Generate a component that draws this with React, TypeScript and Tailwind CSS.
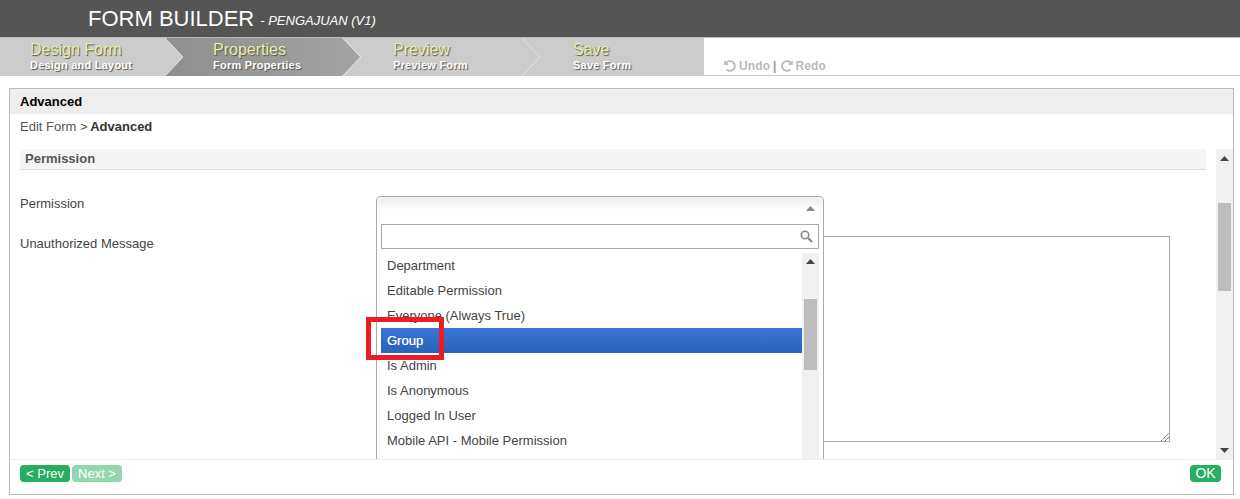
import { FaRedoAlt, FaUndoAlt } from 'react-icons/fa';

const permissionOptions = [
  'Department',
  'Editable Permission',
  'Everyone (Always True)',
  'Group',
  'Is Admin',
  'Is Anonymous',
  'Logged In User',
  'Mobile API - Mobile Permission',
];

const steps = [
  { title: 'Design Form', sub: 'Design and Layout', width: 'w-[165px]', pad: 'pl-[30px]' },
  { title: 'Properties', sub: 'Form Properties', width: 'w-[180px]', pad: 'pl-[48px]' },
  { title: 'Preview', sub: 'Preview Form', width: 'w-[179px]', pad: 'pl-[48px]' },
  { title: 'Save', sub: 'Save Form', width: 'w-[179px]', pad: 'pl-[49px]' },
];

function Chevron({ x }: { x: number }) {
  return (
    <svg className="absolute top-0 h-[38px] w-[22px]" style={{ left: x }} viewBox="0 0 22 38">
      <path d="M1 0 L19 19 L1 38" fill="none" stroke="#e4e4e4" strokeWidth="1" />
    </svg>
  );
}

function Triangle({ down, color = '#555' }: { down?: boolean; color?: string }) {
  return (
    <svg className="block" width="9" height="5" viewBox="0 0 9 5">
      <path d={down ? 'M0 0 H9 L4.5 5 Z' : 'M4.5 0 L9 5 H0 Z'} fill={color} />
    </svg>
  );
}

function StepBar() {
  return (
    <div className="flex h-[39px] border-t border-[#bbbbbb] bg-white">
      <div className="relative flex w-[703px] bg-[#cccccc]">
        <svg className="absolute left-[164px] top-0 h-[38px] w-[197px]" viewBox="0 0 197 38">
          <defs>
            <linearGradient id="stepActive" x1="0" y1="0" x2="1" y2="0">
              <stop offset="0" stopColor="#8f8f8f" />
              <stop offset="1" stopColor="#a3a3a3" />
            </linearGradient>
          </defs>
          <path d="M1 0 H178 L196 19 L178 38 H1 L19 19 Z" fill="url(#stepActive)" />
        </svg>
        <Chevron x={164} />
        <Chevron x={342} />
        <Chevron x={521} />
        {steps.map((step) => (
          <div
            key={step.title}
            className={`relative flex flex-col ${step.width} ${step.pad} pt-[2px] [text-shadow:1px_1px_1px_#555]`}
          >
            <span className="text-[16px] leading-[19px] text-[#e6eda6]">{step.title}</span>
            <span className="text-[11px] font-bold leading-[12px] tracking-[0.22px] text-white">{step.sub}</span>
          </div>
        ))}
      </div>
      <div className="flex flex-1 items-end gap-[3px] border-b border-l border-[#cccccc] pb-px pl-[20px] text-[12px] font-bold leading-[16px] tracking-[0.1px] text-[#bbbbbb]">
        <FaUndoAlt className="mb-[2px] h-[12px] w-[12px]" />
        <span>Undo</span>
        <span className="mr-px text-[#999999]">|</span>
        <FaRedoAlt className="mb-[2px] h-[12px] w-[12px]" />
        <span>Redo</span>
      </div>
    </div>
  );
}

function PermissionDropdown() {
  return (
    <div className="absolute left-[366px] top-[57px] z-10 h-[263px] w-[448px] overflow-hidden rounded-t-[5px] border border-b-0 border-[#aaaaaa] bg-white">
      <div className="flex h-[27px] items-start justify-end bg-gradient-to-b from-[#eeeeee] via-white to-white pr-[8px] pt-[9px]">
        <Triangle color="#888" />
      </div>
      <div className="mx-[4px] flex h-[25px] items-center justify-end border border-[#aaaaaa] pr-[5px]">
        <svg width="13" height="13" viewBox="0 0 13 13">
          <circle cx="5" cy="5" r="3.7" fill="none" stroke="#888" strokeWidth="1.6" />
          <path d="M8 8 L12 12" stroke="#888" strokeWidth="2.2" />
        </svg>
      </div>
      <div className="mx-[4px] mt-[4px] flex">
        <ul className="flex-1">
          {permissionOptions.map((option) => (
            <li
              key={option}
              className={`h-[25px] px-[6px] text-[13px] leading-[25px] ${
                option === 'Group'
                  ? 'bg-gradient-to-b from-[#3875d7] to-[#2a62bc] text-white [text-shadow:0_0_0.5px_#fff]'
                  : 'text-[#444444]'
              }`}
            >
              {option}
            </li>
          ))}
        </ul>
        <div className="h-[210px] w-[17px] bg-[#f0f0f0]">
          <div className="flex h-[17px] items-center justify-center">
            <Triangle color="#444" />
          </div>
          <div className="mx-[2px] mt-[29px] h-[71px] bg-[#bdbdbd]" />
        </div>
      </div>
    </div>
  );
}

export default function App() {
  return (
    <div className="relative h-[499px] w-[1240px] overflow-hidden bg-white font-['Liberation_Sans',Arial,sans-serif]">
      <div className="flex h-[37px] items-center bg-[#555555] pl-[88px] text-white">
        <span className="text-[22px] leading-[36px]">FORM BUILDER</span>
        <span className="ml-[6px] pt-[5px] text-[13px] italic">- PENGAJUAN (V1)</span>
      </div>
      <StepBar />

      <div className="mx-[9px] mt-[12px] h-[407px] w-[1225px] border border-[#bbbbbb]">
        <div className="h-[25px] bg-[#eeeeee] pl-[10px] text-[13px] font-bold leading-[25px] text-black">Advanced</div>
        <div className="h-[25px] pl-[10px] pt-[6px] text-[13px] leading-[14px] text-[#555555]">
          Edit Form &gt; <span className="-ml-px font-bold text-[#333333]">Advanced</span>
        </div>

        <div className="relative flex h-[320px] pt-[10px]">
          <div className="w-[1196px] pl-[10px]">
            <div className="h-[21px] border-b border-[#dddddd] bg-[#f5f5f5] pl-[5px] text-[13px] font-bold leading-[19px] text-[#555555]">
              Permission
            </div>
            <div className="mt-[27px] h-[40px] text-[13px] leading-[14px] text-[#444444]">Permission</div>
            <div className="flex">
              <div className="w-[356px] text-[13px] leading-[14px] text-[#444444]">Unauthorized Message</div>
              <div className="relative -mt-px h-[206px] w-[794px] border border-[#aaaaaa]">
                <svg className="absolute bottom-0 right-0 h-[9px] w-[9px]" viewBox="0 0 9 9">
                  <path d="M1 9 L9 1 M5 9 L9 5" stroke="#666" strokeWidth="1" strokeDasharray="1.5 0.7" />
                </svg>
              </div>
            </div>
          </div>
          <div className="ml-[10px] h-[310px] w-[17px] bg-[#f0f0f0] pt-[7px]">
            <div className="flex justify-center">
              <Triangle color="#444" />
            </div>
            <div className="mx-[2px] mt-[42px] h-[88px] bg-[#bdbdbd]" />
            <div className="mt-[157px] flex justify-center">
              <Triangle down color="#444" />
            </div>
          </div>
          <PermissionDropdown />
        </div>

        <div className="flex h-[35px] items-start justify-between border-t border-[#eeeeee] px-[10px] pt-[5px] text-[13px] leading-[17px] text-white">
          <div className="flex gap-[2px]">
            <span className="h-[17px] w-[50px] rounded-[4px] bg-[#27ae60] text-center">&lt; Prev</span>
            <span className="h-[17px] w-[50px] rounded-[4px] bg-[#93d7af] text-center">Next &gt;</span>
          </div>
          <span className="mr-[2px] h-[17px] w-[31px] rounded-[4px] bg-[#27ae60] text-center text-[14px]">OK</span>
        </div>
      </div>

      <div className="absolute left-[366px] top-[317px] z-20 h-[43px] w-[78px] border-[5px] border-[#ed1c24]" />
    </div>
  );
}
